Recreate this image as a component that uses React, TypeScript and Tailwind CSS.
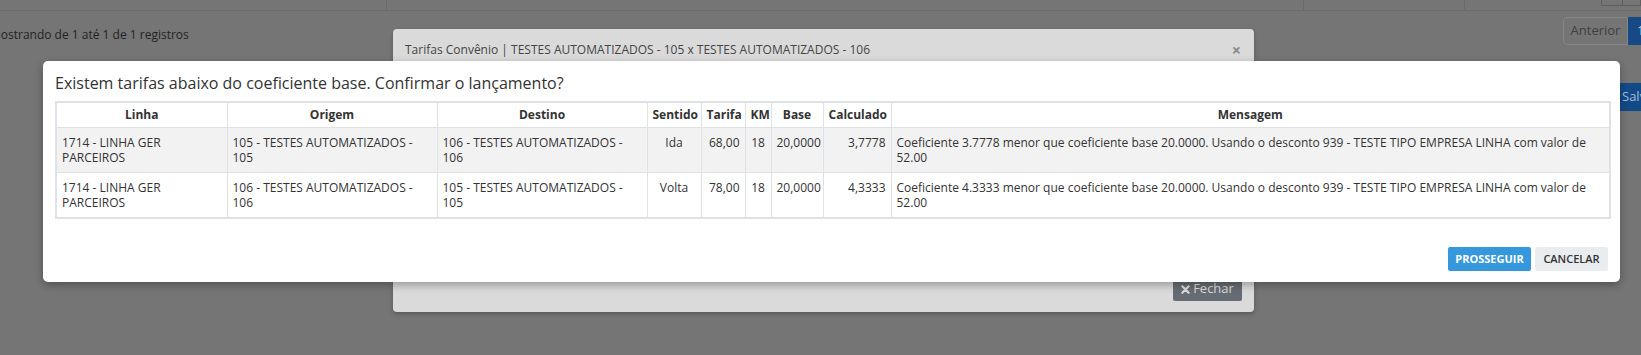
import React from "react";

const rows = [
  {
    linha: ["1714 - LINHA GER", "PARCEIROS"],
    origem: ["105 - TESTES AUTOMATIZADOS -", "105"],
    destino: ["106 - TESTES AUTOMATIZADOS -", "106"],
    sentido: "Ida",
    tarifa: "68,00",
    km: "18",
    base: "20,0000",
    calc: "3,7778",
    msg: [
      "Coeficiente 3.7778 menor que coeficiente base 20.0000. Usando o desconto 939 - TESTE TIPO EMPRESA LINHA com valor de",
      "52.00",
    ],
  },
  {
    linha: ["1714 - LINHA GER", "PARCEIROS"],
    origem: ["106 - TESTES AUTOMATIZADOS -", "106"],
    destino: ["105 - TESTES AUTOMATIZADOS -", "105"],
    sentido: "Volta",
    tarifa: "78,00",
    km: "18",
    base: "20,0000",
    calc: "4,3333",
    msg: [
      "Coeficiente 4.3333 menor que coeficiente base 20.0000. Usando o desconto 939 - TESTE TIPO EMPRESA LINHA com valor de",
      "52.00",
    ],
  },
];

function Lines({ l }: { l: string[] }) {
  return (
    <>
      {l[0]}
      <br />
      {l[1]}
    </>
  );
}

export default function App() {
  const th = "border border-[#dee2e6] px-[5px] py-[5px] leading-[14px] font-bold text-center";
  const td = "border border-[#dee2e6] px-[5px] py-[7px] leading-[15px] align-top";
  return (
    <div className="relative w-[1641px] h-[355px] overflow-hidden bg-[#757575] font-['Open_Sans',sans-serif]">
      {/* Background page */}
      <div className="flex h-[11px] border-b border-[#6b6b6b]">
        <div className="w-[388px] border-r border-[#6b6b6b]" />
        <div className="w-[920px] border-r border-[#6b6b6b]" />
        <div className="w-[161px] border-r border-[#6b6b6b]" />
        <div className="w-[137px]" />
        <div className="flex h-[6px] w-[40px] border border-t-0 border-[#5e5e5e] rounded-bl-[2px]">
          <div className="w-[21px] border-r border-[#5e5e5e]" />
        </div>
      </div>
      <div className="flex h-[50px] items-start justify-between">
        <div className="-ml-[10px] pt-[15px] text-[12px] leading-[18px] text-[#242424]">
          Mostrando de 1 até 1 de 1 registros
        </div>
        <div className="-mr-[17px] flex pt-[6px]">
          <div className="flex h-[28px] w-[65px] items-center justify-center rounded-l-[4px] border border-[#858585] text-[13px] text-[#3f3f3f]">
            Anterior
          </div>
          <div className="flex h-[28px] w-[30px] items-center bg-[#174a85] pl-[9px] text-[13px] text-[#b8c6d6]">
            1
          </div>
        </div>
      </div>
      <div className="flex justify-end pt-[22px]">
        <div className="-mr-[31px] flex h-[28px] w-[60px] items-center rounded-[3px] bg-[#124a88] pl-[10px] text-[13px] text-[#a9bdd3]">
          Salvar
        </div>
      </div>

      {/* Underlying modal (Tarifas Convênio) */}
      <div className="absolute left-[393px] top-[29px] flex h-[283px] w-[861px] flex-col rounded-[4px] bg-[#dadada] shadow-[0_2px_4px_rgba(0,0,0,0.25)]">
        <div className="flex h-[42px] items-center justify-between pl-[12px] pr-[13px] text-[12px] text-[#454545]">
          <span>Tarifas Convênio | TESTES AUTOMATIZADOS - 105 x TESTES AUTOMATIZADOS - 106</span>
          <span className="text-[16px] font-bold leading-none text-[#8a8a8a]">×</span>
        </div>
        <div className="flex-1" />
        <div className="flex justify-end pb-[11px] pr-[12px]">
          <div className="flex h-[24px] w-[69px] items-center justify-center gap-[3px] rounded-[2px] bg-[#666c73] text-[13px] text-[#dcdcdc]">
            <svg width="9" height="9" viewBox="0 0 10 10">
              <path d="M1.5 1.5 L8.5 8.5 M8.5 1.5 L1.5 8.5" stroke="#dcdcdc" strokeWidth="2.4" strokeLinecap="round" />
            </svg>
            <span>Fechar</span>
          </div>
        </div>
      </div>

      {/* Confirmation modal */}
      <div className="absolute left-[43px] top-[61px] flex h-[221px] w-[1577px] flex-col rounded-[5px] bg-white pl-[12px] pr-[12px] shadow-[0_3px_9px_rgba(0,0,0,0.3)]">
        <div className="mt-[10px] mb-[6px] h-[24px] text-[16px] leading-[24px] text-[#333]">
          Existem tarifas abaixo do coeficiente base. Confirmar o lançamento?
        </div>
        <table className="w-[1556px] table-fixed border-collapse border-2 border-[#dee2e6] text-[12px] text-[#333]">
          <colgroup>
            <col className="w-[171px]" />
            <col className="w-[210px]" />
            <col className="w-[210px]" />
            <col className="w-[54px]" />
            <col className="w-[44px]" />
            <col className="w-[26px]" />
            <col className="w-[52px]" />
            <col className="w-[68px]" />
            <col />
          </colgroup>
          <thead>
            <tr className="bg-white">
              <th className={th}>Linha</th>
              <th className={th}>Origem</th>
              <th className={th}>Destino</th>
              <th className={th}>Sentido</th>
              <th className={th}>Tarifa</th>
              <th className={th}>KM</th>
              <th className={th}>Base</th>
              <th className={th}>Calculado</th>
              <th className={th}>Mensagem</th>
            </tr>
          </thead>
          <tbody>
            {rows.map((r, i) => (
              <tr key={i} className={i === 0 ? "bg-[#f2f2f2]" : "bg-white"}>
                <td className={td}>
                  <Lines l={r.linha} />
                </td>
                <td className={td}>
                  <Lines l={r.origem} />
                </td>
                <td className={td}>
                  <Lines l={r.destino} />
                </td>
                <td className={`${td} text-center`}>{r.sentido}</td>
                <td className={`${td} text-right`}>{r.tarifa}</td>
                <td className={`${td} text-center`}>{r.km}</td>
                <td className={`${td} text-right`}>{r.base}</td>
                <td className={`${td} text-right`}>{r.calc}</td>
                <td className={td}>
                  <Lines l={r.msg} />
                </td>
              </tr>
            ))}
          </tbody>
        </table>
        <div className="mt-[28px] flex justify-end gap-[4px]">
          <div className="flex h-[24px] w-[83px] items-center justify-center rounded-[2px] bg-[#3598dc] text-[11px] font-bold text-white">
            PROSSEGUIR
          </div>
          <div className="flex h-[24px] w-[73px] items-center justify-center rounded-[2px] bg-[#e9edf0] text-[11px] font-semibold text-[#333]">
            CANCELAR
          </div>
        </div>
      </div>
    </div>
  );
}
